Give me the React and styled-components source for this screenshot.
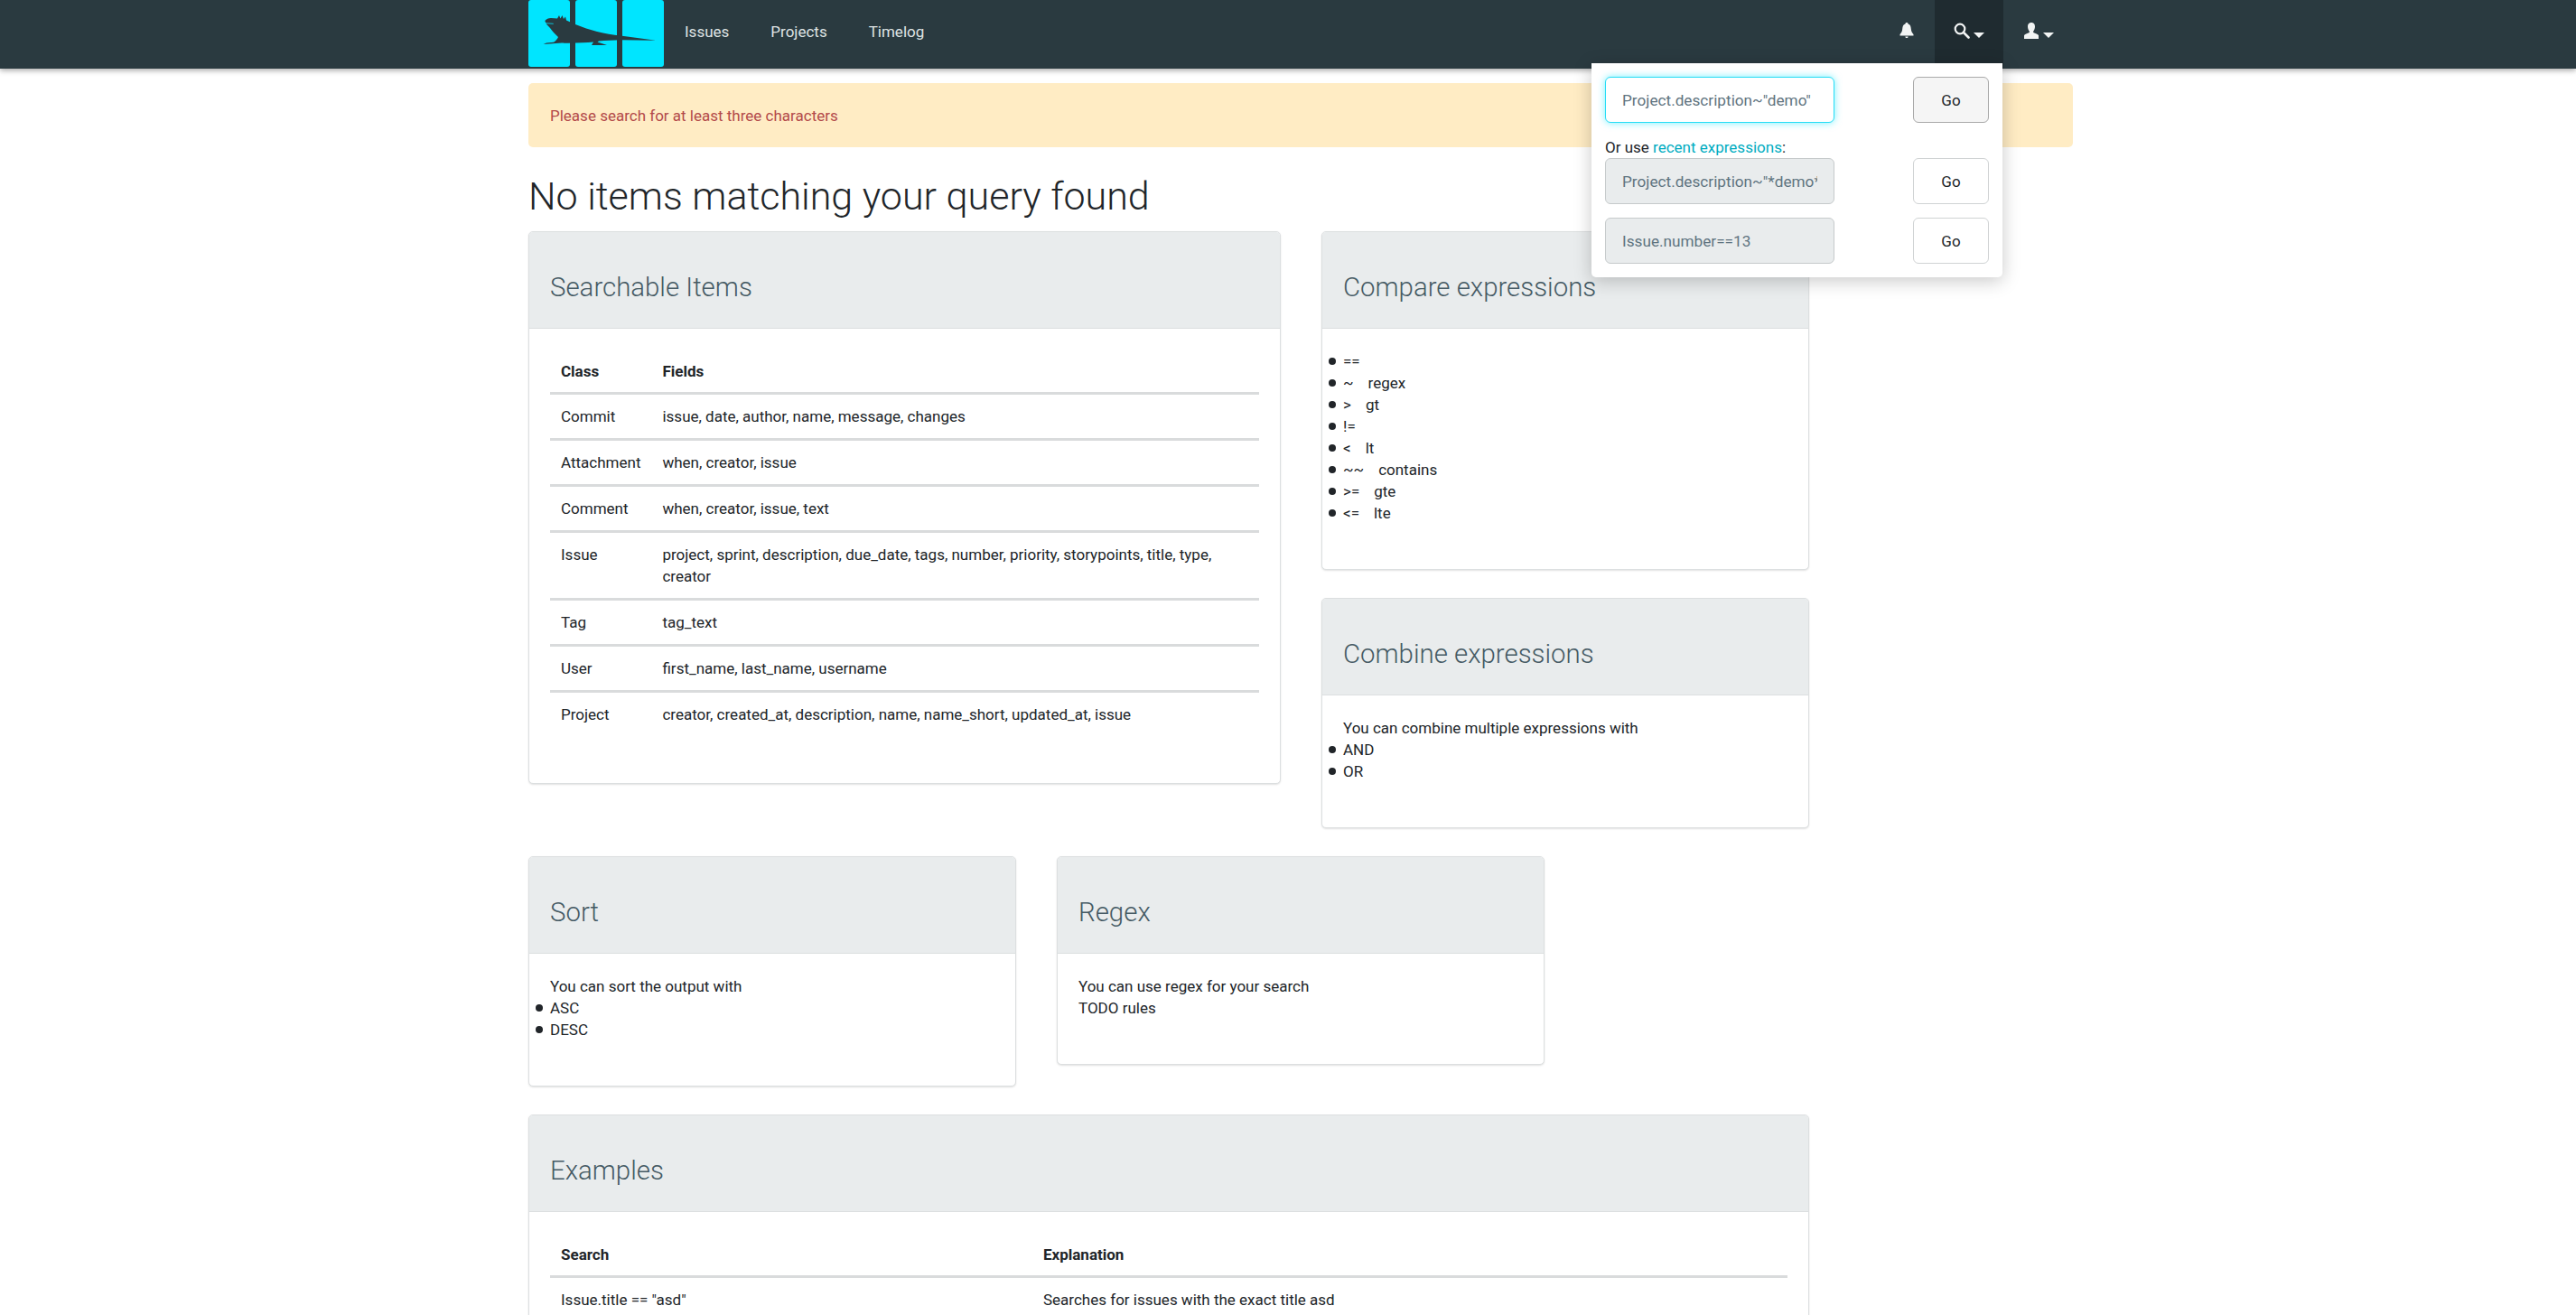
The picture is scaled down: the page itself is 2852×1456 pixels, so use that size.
import React from "react";
import styled, { createGlobalStyle } from "styled-components";

const COLORS = {
    nav: "#2a3a40",
    navActive: "#1f2b30",
    cyan: "#00e5ff",
    headerBg: "#e9eced",
    heading: "#455a64",
    border: "#dcdfe0",
    text: "#212529",
};

const GlobalStyle = createGlobalStyle`
html, body {
    margin: 0;
    padding: 0;
    background: #fff;
}
body {
    font-family: Roboto, "Liberation Sans", sans-serif;
    font-size: 17px;
    line-height: 24px;
    color: ${COLORS.text};
}
* {
    box-sizing: border-box;
}
`;

const Page = styled.div`
height: 1456px;
overflow: hidden;
position: relative;
`;

const Navbar = styled.nav`
height: 76px;
background: ${COLORS.nav};
box-shadow: 0 2px 6px rgba(0, 0, 0, 0.35);
display: flex;
padding-left: 585px;
padding-right: 558px;
position: relative;
`;

const Logo = styled.div`
width: 150px;
height: 74px;
display: grid;
grid-template-columns: repeat(3, 46px);
gap: 6px;
position: relative;
`;

const Tile = styled.div`
background: ${COLORS.cyan};
border-radius: 3px;
`;

const Iguana = styled.svg`
position: absolute;
left: 0;
top: 0;
`;

const NavLinks = styled.div`
display: flex;
padding-left: 23px;
gap: 46px;
flex: 1;
`;

const NavLink = styled.a`
color: #dfe3e4;
line-height: 71px;
`;

const NavIcons = styled.div`
display: flex;
`;

const NavIcon = styled.div`
width: 76px;
height: 76px;
padding-bottom: 8px;
padding-left: ${({ $shift }) => $shift || 0}px;
display: flex;
align-items: center;
justify-content: center;
gap: 4px;
background: ${({ $active }) => ($active ? COLORS.navActive : "transparent")};
`;

const Caret = styled.span`
width: 0;
height: 0;
margin-top: 9px;
border-left: 6px solid transparent;
border-right: 6px solid transparent;
border-top: 6px solid #f2f4f4;
`;

const Dropdown = styled.div`
position: absolute;
left: 1762px;
top: 70px;
width: 455px;
height: 237px;
background: #fff;
border-radius: 0 0 5px 5px;
box-shadow: 0 4px 20px rgba(0, 0, 0, 0.22);
padding: 15px;
display: flex;
flex-direction: column;
z-index: 5;
`;

const SearchRow = styled.form`
display: flex;
justify-content: space-between;
margin-bottom: ${({ $gap }) => $gap}px;
`;

const InputBox = styled.div`
width: 254px;
height: 51px;
padding: 0 18px;
display: flex;
border-radius: 6px;
border: 1px solid ${({ $focused }) => ($focused ? "#26dcf5" : "#c6cacb")};
background: ${({ $focused }) => ($focused ? "#fff" : COLORS.headerBg)};
box-shadow: ${({ $focused }) => ($focused ? "0 0 8px rgba(0, 229, 255, 0.55)" : "none")};
`;

const SearchInput = styled.input`
width: 100%;
min-width: 0;
padding: 0;
border: none;
outline: none;
background: transparent;
font: 17.2px Roboto, sans-serif;
color: #5f7480;
`;

const GoButton = styled.button`
width: 84px;
height: 51px;
font: 17px Roboto, sans-serif;
color: #212529;
border-radius: 6px;
border: 1px solid ${({ $focused }) => ($focused ? "#a9a9a9" : "#d0d3d4")};
background: ${({ $focused }) => ($focused ? "#f5f5f5" : "#fff")};
`;

const RecentLabel = styled.div`
line-height: 24px;
`;

const Link = styled.a`
color: #00acc1;
`;

const Container = styled.main`
width: 1710px;
margin-left: 585px;
padding-top: 16px;
`;

const Alert = styled.div`
height: 71px;
background: #ffecc4;
border-radius: 5px;
color: #b34a4a;
padding: 24px;
margin-bottom: 27px;
`;

const Title = styled.h1`
font-size: 43px;
font-weight: 300;
line-height: 54px;
margin: 0 0 12px;
color: #212529;
`;

const CardRow = styled.div`
display: flex;
gap: 45px;
align-items: flex-start;
margin-bottom: 31px;
`;

const Column = styled.div`
display: flex;
flex-direction: column;
gap: 31px;
`;

const Card = styled.section`
width: ${({ $width }) => $width}px;
background: #fff;
border: 1px solid ${COLORS.border};
border-radius: 5px;
box-shadow: 0 1px 2px rgba(0, 0, 0, 0.12);
overflow: hidden;
`;

const CardHeader = styled.header`
height: 107px;
background: ${COLORS.headerBg};
border-bottom: 1px solid ${COLORS.border};
padding: 0 23px;
display: flex;
align-items: center;
`;

const CardTitle = styled.h3`
margin: 15px 0 0;
font-size: 29.4px;
font-weight: 300;
line-height: 34px;
color: ${COLORS.heading};
`;

const CardBody = styled.div`
padding: 24px 23px 50px;
`;

const Bullets = styled.ul`
margin: 0;
padding: 0;
list-style: none;
`;

const Bullet = styled.li`
position: relative;
&::before {
    content: "";
    position: absolute;
    left: -16px;
    top: 8px;
    width: 8px;
    height: 8px;
    border-radius: 50%;
    background: #212529;
}
`;

const Spaced = styled.span`
margin-left: 16px;
`;

const Table = styled.table`
width: 100%;
border-collapse: collapse;
margin-bottom: 2px;
`;

const Th = styled.th`
text-align: left;
padding: 11px 12px;
font-weight: 700;
width: ${({ $width }) => ($width ? `${$width}px` : "auto")};
border-bottom: 3px solid #d9dbdc;
`;

const Td = styled.td`
padding: 12px;
vertical-align: top;
border-top: ${({ $first }) => ($first ? "none" : "3px solid #d9dbdc")};
`;

const ITEMS = [
    ["Commit", "issue, date, author, name, message, changes"],
    ["Attachment", "when, creator, issue"],
    ["Comment", "when, creator, issue, text"],
    ["Issue", "project, sprint, description, due_date, tags, number, priority, storypoints, title, type, creator"],
    ["Tag", "tag_text"],
    ["User", "first_name, last_name, username"],
    ["Project", "creator, created_at, description, name, name_short, updated_at, issue"],
];

const COMPARE = [
    ["==", ""],
    ["~", "regex"],
    [">", "gt"],
    ["!=", ""],
    ["<", "lt"],
    ["~~", "contains"],
    [">=", "gte"],
    ["<=", "lte"],
];

const App = () => {
    return (
        <Page>
            <GlobalStyle />
            <Navbar>
                <Logo>
                    <Tile />
                    <Tile />
                    <Tile />
                    <Iguana width="150" height="74" viewBox="0 0 150 74">
                        <path
                            fill={COLORS.nav}
                            d="M18.3 23 C20 21 22 20 25 20 L32 20.5 L34 17 L35.5 20.5 L37.5 17 L39 21 L41 18.5 L42 22.5 L52 27 C60 30 68 33 76 35 C85 37 93 38.5 102 39.5 L141 44.7 L102 44.3 C94 44.5 85 45 78 45.5 L76.5 46.5 L87 50 L70 50 L72 46.5 C68 47 64 47.3 60 47.3 L44 47.7 C41 47.7 38.5 47.7 37 47.5 L16.7 49 L20 47.5 L28 46.7 C30 46 32 43 33 41 C29 37 26 34 24 31 C22 29 19 26 18.3 23 Z"
                        />
                        <path d="M19 25.7 L27.7 26.3" stroke={COLORS.cyan} strokeWidth="0.8" fill="none" />
                    </Iguana>
                </Logo>
                <NavLinks>
                    <NavLink>Issues</NavLink>
                    <NavLink>Projects</NavLink>
                    <NavLink>Timelog</NavLink>
                </NavLinks>
                <NavIcons>
                    <NavIcon $shift={13}>
                        <svg width="16" height="18" viewBox="0 0 16 18">
                            <path fill="#f2f4f4" d="M8 0 C9 0 9.6 .7 9.6 1.6 C12 2.4 12.6 4.6 12.8 7 C13 10 14 11.5 15.5 13 L15.5 14.5 L.5 14.5 L.5 13 C2 11.5 3 10 3.2 7 C3.4 4.6 4 2.4 6.4 1.6 C6.4 .7 7 0 8 0 Z M6.4 15.4 L9.6 15.4 C9.6 16.4 8.9 17 8 17 C7.1 17 6.4 16.4 6.4 15.4 Z" />
                        </svg>
                    </NavIcon>
                    <NavIcon $active>
                        <svg width="18" height="18" viewBox="0 0 18 18">
                            <circle cx="7" cy="7" r="5.3" fill="none" stroke="#f2f4f4" strokeWidth="2.2" />
                            <path d="M11 11 L16.5 16.5" stroke="#f2f4f4" strokeWidth="2.6" strokeLinecap="round" />
                        </svg>
                        <Caret />
                    </NavIcon>
                    <NavIcon $shift={1}>
                        <svg width="18" height="18" viewBox="0 0 18 18">
                            <path fill="#f2f4f4" d="M9 0 C12 0 13 2.2 13 4.5 C13 6.8 12 8.5 11.2 9.6 L11.2 11 C13.5 12 16.5 12.8 17 14.2 L17 18 L1 18 L1 14.2 C1.5 12.8 4.5 12 6.8 11 L6.8 9.6 C6 8.5 5 6.8 5 4.5 C5 2.2 6 0 9 0 Z" />
                        </svg>
                        <Caret />
                    </NavIcon>
                </NavIcons>
            </Navbar>
            <Dropdown>
                <SearchRow $gap={15}>
                    <InputBox $focused>
                        <SearchInput readOnly value={'Project.description~"demo"'} />
                    </InputBox>
                    <GoButton type="button" $focused>Go</GoButton>
                </SearchRow>
                <RecentLabel>
                    Or use <Link>recent expressions</Link>:
                </RecentLabel>
                <SearchRow $gap={15}>
                    <InputBox>
                        <SearchInput readOnly value={'Project.description~"*demo*"'} />
                    </InputBox>
                    <GoButton type="button">Go</GoButton>
                </SearchRow>
                <SearchRow $gap={0}>
                    <InputBox>
                        <SearchInput readOnly value="Issue.number==13" />
                    </InputBox>
                    <GoButton type="button">Go</GoButton>
                </SearchRow>
            </Dropdown>
            <Container>
                <Alert>Please search for at least three characters</Alert>
                <Title>No items matching your query found</Title>
                <CardRow>
                    <Card $width={833}>
                        <CardHeader>
                            <CardTitle>Searchable Items</CardTitle>
                        </CardHeader>
                        <CardBody>
                            <Table>
                                <thead>
                                    <tr>
                                        <Th>Class</Th>
                                        <Th>Fields</Th>
                                    </tr>
                                </thead>
                                <tbody>
                                    {ITEMS.map(([name, fields], i) => (
                                        <tr key={name}>
                                            <Td $first={i === 0}>{name}</Td>
                                            <Td $first={i === 0}>{fields}</Td>
                                        </tr>
                                    ))}
                                </tbody>
                            </Table>
                        </CardBody>
                    </Card>
                    <Column>
                        <Card $width={540}>
                            <CardHeader>
                                <CardTitle>Compare expressions</CardTitle>
                            </CardHeader>
                            <CardBody>
                                <Bullets>
                                    {COMPARE.map(([op, label]) => (
                                        <Bullet key={op}>
                                            {op}
                                            {label && <Spaced>{label}</Spaced>}
                                        </Bullet>
                                    ))}
                                </Bullets>
                            </CardBody>
                        </Card>
                        <Card $width={540}>
                            <CardHeader>
                                <CardTitle>Combine expressions</CardTitle>
                            </CardHeader>
                            <CardBody>
                                You can combine multiple expressions with
                                <Bullets>
                                    <Bullet>AND</Bullet>
                                    <Bullet>OR</Bullet>
                                </Bullets>
                            </CardBody>
                        </Card>
                    </Column>
                </CardRow>
                <CardRow>
                    <Card $width={540}>
                        <CardHeader>
                            <CardTitle>Sort</CardTitle>
                        </CardHeader>
                        <CardBody>
                            You can sort the output with
                            <Bullets>
                                <Bullet>ASC</Bullet>
                                <Bullet>DESC</Bullet>
                            </Bullets>
                        </CardBody>
                    </Card>
                    <Card $width={540}>
                        <CardHeader>
                            <CardTitle>Regex</CardTitle>
                        </CardHeader>
                        <CardBody>
                            You can use regex for your search
                            <br />
                            TODO rules
                        </CardBody>
                    </Card>
                </CardRow>
                <Card $width={1418}>
                    <CardHeader>
                        <CardTitle>Examples</CardTitle>
                    </CardHeader>
                    <CardBody>
                        <Table>
                            <thead>
                                <tr>
                                    <Th $width={534}>Search</Th>
                                    <Th>Explanation</Th>
                                </tr>
                            </thead>
                            <tbody>
                                <tr>
                                    <Td $first>Issue.title == "asd"</Td>
                                    <Td $first>Searches for issues with the exact title asd</Td>
                                </tr>
                            </tbody>
                        </Table>
                    </CardBody>
                </Card>
            </Container>
        </Page>
    );
};

export default App;
